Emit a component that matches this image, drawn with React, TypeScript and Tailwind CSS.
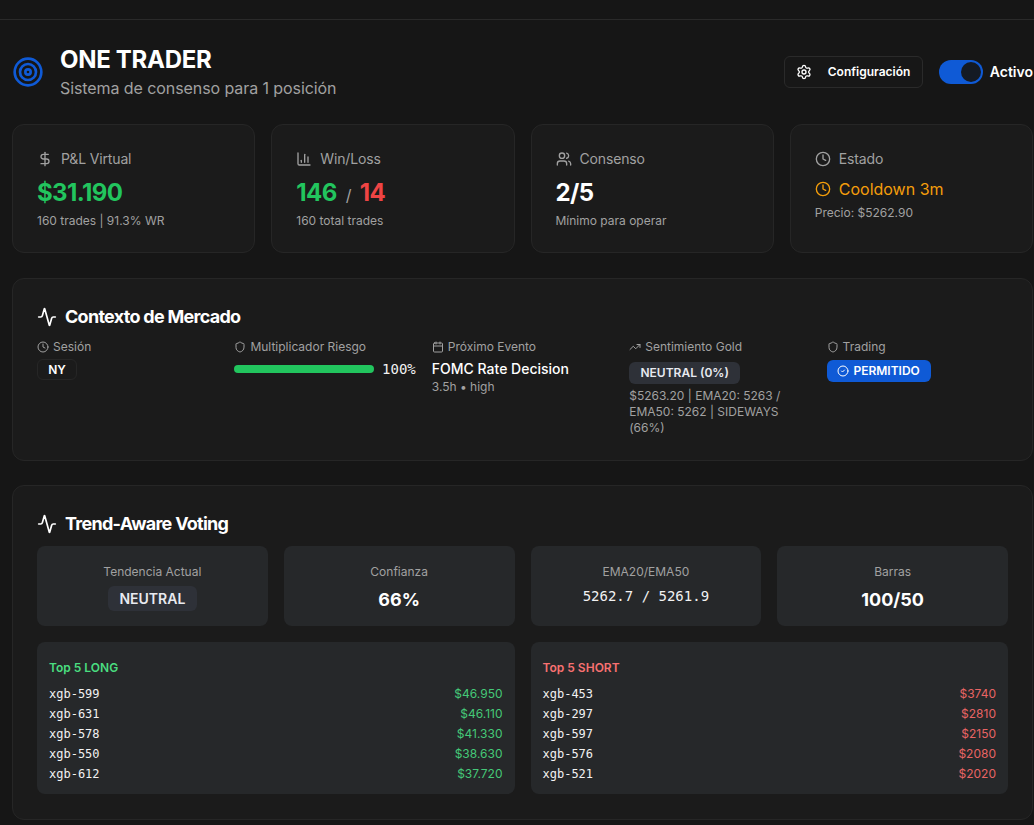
import {
  Activity,
  Calendar,
  ChartColumn,
  CircleCheck,
  Clock,
  DollarSign,
  Settings,
  Shield,
  Target,
  TrendingUp,
  Users,
} from "lucide-react";

const longs = [
  ["xgb-599", "$46.950"],
  ["xgb-631", "$46.110"],
  ["xgb-578", "$41.330"],
  ["xgb-550", "$38.630"],
  ["xgb-612", "$37.720"],
];

const shorts = [
  ["xgb-453", "$3740"],
  ["xgb-297", "$2810"],
  ["xgb-597", "$2150"],
  ["xgb-576", "$2080"],
  ["xgb-521", "$2020"],
];

const mono = "font-['DejaVu_Sans_Mono',monospace]";

function Ranking({ title, rows, titleClass, valueClass }: { title: string; rows: string[][]; titleClass: string; valueClass: string }) {
  return (
    <div className="h-[152px] rounded-lg bg-[#26282a] px-3 pt-[18px]">
      <div className={`h-4 text-xs leading-4 font-semibold ${titleClass}`}>{title}</div>
      <div className="mt-[8px] flex flex-col">
        {rows.map(([name, value]) => (
          <div key={name} className="flex h-5 items-center justify-between text-xs">
            <span className={`${mono} text-[#f2f2f2]`}>{name}</span>
            <span className={valueClass}>{value}</span>
          </div>
        ))}
      </div>
    </div>
  );
}

function Tile({ label, children }: { label: string; children: React.ReactNode }) {
  return (
    <div className="flex h-20 flex-col items-center rounded-lg bg-[#26282a] pt-[17px]">
      <div className="h-[18px] text-xs leading-[18px] text-[#a1a1a1]">{label}</div>
      {children}
    </div>
  );
}

export default function App() {
  return (
    <div className="h-[825px] w-[1034px] overflow-hidden bg-[#161616] font-['Inter',sans-serif] text-white">
      <div className="h-5 border-b border-[#2a2a2a]" />
      <main className="pl-3 pr-px">
        <header className="flex h-[104px] items-center justify-between pb-1">
          <div className="flex items-center gap-[16px] pt-[1px]">
            <Target size={32} strokeWidth={2} className="mt-[3px] text-[#0f5ad6]" />
            <div>
              <h1 className="text-2xl leading-8 font-bold tracking-[-0.3px]">ONE TRADER</h1>
              <p className="mt-[2px] text-base leading-5 tracking-[-0.08px] text-[#a1a1a1]">Sistema de consenso para 1 posición</p>
            </div>
          </div>
          <div className="mt-1 flex items-center gap-4">
            <button className="flex h-8 w-[139px] items-center rounded-md border border-[#2a2a2a] bg-[#171717] pl-[11px] text-xs font-semibold">
              <Settings size={16} />
              <span className="ml-4">Configuración</span>
            </button>
            <div className="flex items-center gap-[7px]">
              <div className="flex h-6 w-11 items-center justify-end rounded-full bg-[#0f5ad6] pr-[2px]">
                <div className="size-5 rounded-full bg-[#141a24]" />
              </div>
              <span className="text-sm font-semibold">Activo</span>
            </div>
          </div>
        </header>

        <section className="grid grid-cols-4 gap-4">
          <div className="h-[129px] rounded-xl border border-[#262626] bg-[#1b1b1b] p-6">
            <div className="flex h-5 items-center gap-2 text-sm tracking-[-0.15px] text-[#a1a1a1]">
              <DollarSign size={16} />
              <span>P&amp;L Virtual</span>
            </div>
            <div className="mt-2 text-2xl leading-8 font-bold tracking-tight text-[#22c55e]">$31.190</div>
            <div className="mt-1 text-xs leading-4 text-[#a1a1a1]">160 trades | 91.3% WR</div>
          </div>
          <div className="h-[129px] rounded-xl border border-[#262626] bg-[#1b1b1b] p-6">
            <div className="flex h-5 items-center gap-2 text-sm tracking-[-0.15px] text-[#a1a1a1]">
              <ChartColumn size={16} />
              <span>Win/Loss</span>
            </div>
            <div className="mt-2 flex items-baseline text-2xl leading-8 font-bold tracking-tight">
              <span className="text-[#22c55e]">146</span>
              <span className="mx-[9px] text-base font-normal text-[#a1a1a1]">/</span>
              <span className="text-[#ef4444]">14</span>
            </div>
            <div className="mt-1 text-xs leading-4 text-[#a1a1a1]">160 total trades</div>
          </div>
          <div className="h-[129px] rounded-xl border border-[#262626] bg-[#1b1b1b] p-6">
            <div className="flex h-5 items-center gap-2 text-sm tracking-[-0.15px] text-[#a1a1a1]">
              <Users size={16} />
              <span>Consenso</span>
            </div>
            <div className="mt-2 text-2xl leading-8 font-bold tracking-tight">2/5</div>
            <div className="mt-1 text-xs leading-4 text-[#a1a1a1]">Mínimo para operar</div>
          </div>
          <div className="h-[129px] rounded-xl border border-[#262626] bg-[#1b1b1b] p-6">
            <div className="flex h-5 items-center gap-2 text-sm tracking-[-0.15px] text-[#a1a1a1]">
              <Clock size={16} />
              <span>Estado</span>
            </div>
            <div className="mt-[6px] flex h-7 items-center gap-2 text-base text-[#f59e0b]">
              <Clock size={16} />
              <span>Cooldown 3m</span>
            </div>
            <div className="mt-[2px] text-xs leading-4 text-[#a1a1a1]">Precio: $5262.90</div>
          </div>
        </section>

        <section className="mt-[25px] h-[183px] rounded-xl border border-[#262626] bg-[#1b1b1b] px-6 pt-6">
          <div className="flex h-7 items-center gap-2 text-lg font-bold">
            <Activity size={20} />
            <h2 className="tracking-[-0.72px]">Contexto de Mercado</h2>
          </div>
          <div className="mt-[6px] grid grid-cols-5 gap-4">
            <div>
              <div className="flex h-5 items-center gap-1 text-xs text-[#a1a1a1]">
                <Clock size={12} />
                <span>Sesión</span>
              </div>
              <div className="mt-[2px] flex h-[21px] w-10 items-center justify-center rounded-md border border-[#262626] text-xs font-semibold">NY</div>
            </div>
            <div>
              <div className="flex h-5 items-center gap-1 text-xs text-[#a1a1a1]">
                <Shield size={12} />
                <span>Multiplicador Riesgo</span>
              </div>
              <div className="mt-[2px] flex h-5 items-center gap-2">
                <div className="h-2 flex-1 rounded-full bg-[#22c55e]" />
                <span className={`${mono} text-sm text-[#f2f2f2]`}>100%</span>
              </div>
            </div>
            <div>
              <div className="flex h-5 items-center gap-1 text-xs text-[#a1a1a1]">
                <Calendar size={12} />
                <span>Próximo Evento</span>
              </div>
              <div className="mt-[2px] text-sm leading-5 font-medium">FOMC Rate Decision</div>
              <div className="text-xs leading-4 text-[#a1a1a1]">3.5h • high</div>
            </div>
            <div>
              <div className="flex h-5 items-center gap-1 text-xs text-[#a1a1a1]">
                <TrendingUp size={12} />
                <span>Sentimiento Gold</span>
              </div>
              <div className="mt-[5px] flex h-[22px] w-[111px] items-center justify-center rounded-md bg-[#2e3138] text-xs font-semibold text-[#e8eaf0]">NEUTRAL (0%)</div>
              <div className="mt-1 text-xs leading-4 text-[#a1a1a1]">$5263.20 | EMA20: 5263 / EMA50: 5262 | SIDEWAYS (66%)</div>
            </div>
            <div>
              <div className="flex h-5 items-center gap-1 text-xs text-[#a1a1a1]">
                <Shield size={12} />
                <span>Trading</span>
              </div>
              <div className="mt-[3px] flex h-[22px] w-[104px] items-center justify-center gap-1 rounded-md bg-[#0f5ad6] text-xs font-semibold">
                <CircleCheck size={12} />
                <span>PERMITIDO</span>
              </div>
            </div>
          </div>
        </section>

        <section className="mt-[24px] h-[335px] rounded-xl border border-[#262626] bg-[#1b1b1b] px-6 pt-6">
          <div className="flex h-7 items-center gap-2 text-lg font-bold">
            <Activity size={20} />
            <h2 className="tracking-[-0.72px]">Trend-Aware Voting</h2>
          </div>
          <div className="mt-[8px] grid grid-cols-4 gap-4">
            <Tile label="Tendencia Actual">
              <div className="mt-[5px] flex h-[25px] w-[89px] items-center justify-center rounded-md bg-[#2e3138] text-sm font-semibold text-[#e8eaf0]">NEUTRAL</div>
            </Tile>
            <Tile label="Confianza">
              <div className="mt-[5px] text-lg leading-7 font-bold">66%</div>
            </Tile>
            <Tile label="EMA20/EMA50">
              <div className={`${mono} mt-[5px] text-sm leading-5 text-[#f2f2f2]`}>5262.7 / 5261.9</div>
            </Tile>
            <Tile label="Barras">
              <div className="mt-[5px] text-lg leading-7 font-bold">100/50</div>
            </Tile>
          </div>
          <div className="mt-4 grid grid-cols-2 gap-4">
            <Ranking title="Top 5 LONG" rows={longs} titleClass="text-[#4ade80]" valueClass="text-[#45c878]" />
            <Ranking title="Top 5 SHORT" rows={shorts} titleClass="text-[#f87171]" valueClass="text-[#e86464]" />
          </div>
        </section>
      </main>
    </div>
  );
}
